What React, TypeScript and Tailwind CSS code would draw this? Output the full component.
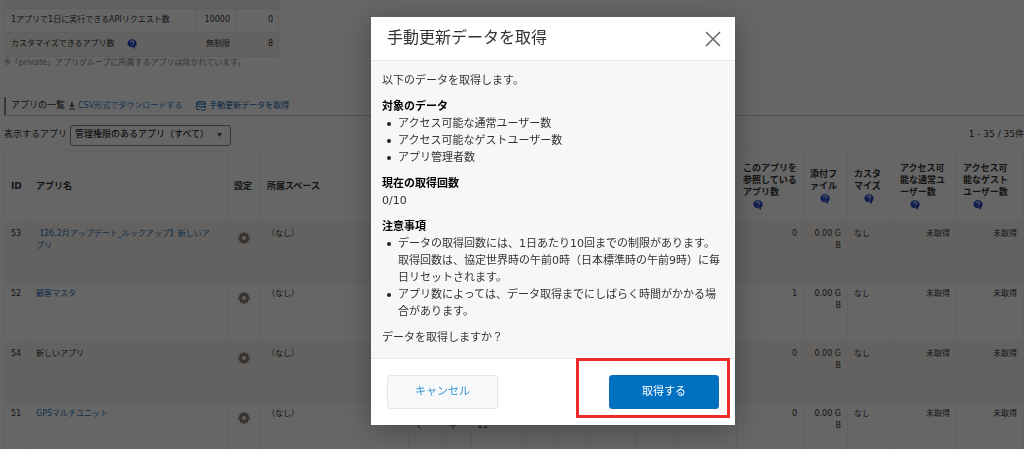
import { useState } from "react";
import type { ReactNode } from "react";

type AppRow = {
  id: number;
  name: string;
  linked: boolean;
  references: number;
  scope?: string;
  status?: string;
  updated?: string;
};

const apps: AppRow[] = [
  { id: 53, name: "【26.2月アップデート_ルックアップ】新しいアプリ", linked: true, references: 0 },
  { id: 52, name: "顧客マスタ", linked: true, references: 1 },
  { id: 54, name: "新しいアプリ", linked: false, references: 0 },
  {
    id: 51,
    name: "GPSマルチユニット",
    linked: true,
    references: 0,
    scope: "て",
    status: "中",
    updated: "21",
  },
];

const notes = [
  "データの取得回数には、1日あたり10回までの制限があります。取得回数は、協定世界時の午前0時（日本標準時の午前9時）に毎日リセットされます。",
  "アプリ数によっては、データ取得までにしばらく時間がかかる場合があります。",
];

const targets = [
  "アクセス可能な通常ユーザー数",
  "アクセス可能なゲストユーザー数",
  "アプリ管理者数",
];

const HelpIcon = () => (
  <svg viewBox="0 0 20 20" className="inline-block size-[10px] shrink-0" aria-hidden="true">
    <path
      d="M10 0.5C4.5 0.5 0.8 4 0.8 8.6s3.7 8 8.7 8.1c1 0 2-.1 2.9-.4.7 1.5 2 2.7 4.2 3.2-.8-1.3-.9-2.8-.6-4.3 2.1-1.5 3.3-3.8 3.3-6.6C19.3 4 15.5.5 10 .5z"
      fill="#2447c8"
    />
    <path
      d="M6.8 6.8C6.9 4.8 8.2 3.7 10.2 3.7s3.4 1.1 3.4 2.8c0 2.300-3.100 2.200-3.100 4.200M10.500 12.300v2.200"
      fill="none"
      stroke="#d5dcf5"
      strokeWidth="2.2"
    />
  </svg>
);

const GearIcon = () => (
  <svg viewBox="0 0 24 24" className="size-3" aria-hidden="true">
    <g fill="#8a817c">
      <rect x="9" y="0.5" width="6" height="23" rx="1" />
      <rect x="9" y="0.5" width="6" height="23" rx="1" transform="rotate(45 12 12)" />
      <rect x="9" y="0.5" width="6" height="23" rx="1" transform="rotate(90 12 12)" />
      <rect x="9" y="0.5" width="6" height="23" rx="1" transform="rotate(135 12 12)" />
      <circle cx="12" cy="12" r="9" />
    </g>
    <circle cx="12" cy="12" r="4" fill="#f4f4f0" />
  </svg>
);

const DownloadIcon = () => (
  <svg viewBox="0 0 12 16" className="h-2 w-[6px]" fill="#444" aria-hidden="true">
    <path d="M4.500 0h3v6h3.500l-5 5.500L1 6h3.500zM0 13h12v2H0z" />
  </svg>
);

const DataIcon = () => (
  <svg viewBox="0 0 20 20" className="size-[10px]" fill="none" stroke="#0b5fae" strokeWidth="2" aria-hidden="true">
    <path d="M7 17H3.500A2 2 0 0 1 1.500 15V3.500a2 2 0 0 1 2-2h13a2 2 0 0 1 2 2V8M1.500 6h17M5 10.500h4" />
    <path d="M9.500 14.500c0-2.500 2-4 4.500-4 1.800 0 3.200.8 4 2M18.500 9.500v3.200h-3.200M18.500 15.500c0 2-2 3.500-4.500 3.500-1.800 0-3.200-.8-4-2" />
  </svg>
);

const HeadCell = ({ children, help }: { children?: ReactNode; help?: boolean }) => (
  <th className="border border-[#f2f2f2] pr-1 pl-[6px] text-left align-middle text-[9px] leading-3 font-bold text-[#333]">
    {children}
    {help && (
      <div className="pl-[10px]">
        <HelpIcon />
      </div>
    )}
  </th>
);

const Cell = ({ children, right }: { children?: ReactNode; right?: boolean }) => (
  <td
    className={
      right
        ? "border border-[#f2f2f2] pt-[5px] pr-[6px] pl-2 text-right align-top break-all"
        : "border border-[#f2f2f2] pt-[5px] pr-1 pl-[6px] text-left align-top break-all"
    }
  >
    {children}
  </td>
);

const UsageTable = () => (
  <table className="w-[275px] table-fixed border-collapse text-[8px] text-[#333]">
    <colgroup>
      <col />
      <col className="w-10" />
      <col className="w-[43px]" />
    </colgroup>
    <tbody>
      <tr className="h-2 bg-[#f7f6f1]">
        <td className="border border-t-0 border-[#ecece8]" />
        <td className="border border-t-0 border-[#ecece8]" />
        <td className="border border-t-0 border-[#ecece8]" />
      </tr>
      <tr className="h-6">
        <td className="border border-[#ecece8] pl-[6px]">1アプリで1日に実行できるAPIリクエスト数</td>
        <td className="border border-[#ecece8] pr-[5px] text-right">10000</td>
        <td className="border border-[#ecece8] pr-[5px] text-right">0</td>
      </tr>
      <tr className="h-6 bg-[#f7f6f1]">
        <td className="border border-[#ecece8] pl-[6px]">
          <div className="flex items-center gap-3">
            カスタマイズできるアプリ数
            <HelpIcon />
          </div>
        </td>
        <td className="border border-[#ecece8] pr-[5px] text-right">無制限</td>
        <td className="border border-[#ecece8] pr-[5px] text-right">8</td>
      </tr>
    </tbody>
  </table>
);

const AppTable = () => (
  <table className="w-full table-fixed border-collapse text-[8px] leading-3 text-[#333]">
    <colgroup>
      <col className="w-[25px]" />
      <col className="w-[198px]" />
      <col className="w-[33px]" />
      <col />
      <col className="w-[34px]" />
      <col className="w-[29px]" />
      <col className="w-[54px]" />
      <col className="w-[29px]" />
      <col className="w-8" />
      <col className="w-[50px]" />
      <col className="w-[41px]" />
      <col className="w-[59px]" />
      <col className="w-[67px]" />
      <col className="w-11" />
      <col className="w-[46px]" />
      <col className="w-[63px]" />
      <col className="w-[67px]" />
    </colgroup>
    <thead>
      <tr className="h-[72px]">
        <HeadCell>ID</HeadCell>
        <HeadCell>アプリ名</HeadCell>
        <HeadCell>設定</HeadCell>
        <HeadCell>所属スペース</HeadCell>
        <HeadCell />
        <HeadCell />
        <HeadCell />
        <HeadCell />
        <HeadCell />
        <HeadCell />
        <HeadCell />
        <HeadCell />
        <HeadCell help>このアプリを参照しているアプリ数</HeadCell>
        <HeadCell help>
          添付フ
          <br />
          ァイル
        </HeadCell>
        <HeadCell help>カスタマイズ</HeadCell>
        <HeadCell help>
          アクセス可
          <br />
          能な通常ユ
          <br />
          ーザー数
        </HeadCell>
        <HeadCell help>
          アクセス可
          <br />
          能なゲスト
          <br />
          ユーザー数
        </HeadCell>
      </tr>
    </thead>
    <tbody>
      {apps.map((app) => (
        <tr key={app.id} className="h-[60px] odd:bg-[#f7f6f1]">
          <Cell>{app.id}</Cell>
          <Cell>
            {app.linked ? (
              <a href="#" className="block pr-2 text-[#2a75bb]">
                {app.name}
              </a>
            ) : (
              app.name
            )}
          </Cell>
          <Cell>
            <button type="button" aria-label="設定" className="ml-1 pt-1">
              <GearIcon />
            </button>
          </Cell>
          <Cell>（なし）</Cell>
          <Cell>
            <div className="pt-3">{app.scope}</div>
          </Cell>
          <Cell>
            <div className="pt-3">{app.status}</div>
          </Cell>
          <Cell>
            <div className="pt-3">{app.updated}</div>
          </Cell>
          <Cell />
          <Cell />
          <Cell />
          <Cell />
          <Cell />
          <Cell right>{app.references}</Cell>
          <Cell right>0.00 GB</Cell>
          <Cell>なし</Cell>
          <Cell right>未取得</Cell>
          <Cell right>未取得</Cell>
        </tr>
      ))}
    </tbody>
  </table>
);

const BulletList = ({ items }: { items: string[] }) => (
  <ul>
    {items.map((item) => (
      <li key={item} className="flex gap-[7px] pl-[5px]">
        <span className="mt-[7px] size-1 shrink-0 rounded-full bg-[#222]" />
        <span>{item}</span>
      </li>
    ))}
  </ul>
);

const UpdateDialog = ({ onClose }: { onClose: () => void }) => (
  <div className="fixed inset-0 flex items-start justify-center overflow-hidden bg-black/60 pt-[17px] pl-[82px]">
    <div
      role="dialog"
      aria-labelledby="dialog-title"
      className="w-[364px] bg-white text-[11px] text-[#333] shadow-[0_5px_30px_rgba(0,0,0,0.3)]"
    >
      <div className="flex h-11 items-center justify-between border-b border-[#e8e8e8] pr-[14px] pl-4">
        <h2 id="dialog-title" className="pb-[2px] text-[16px] leading-5">
          手動更新データを取得
        </h2>
        <button type="button" aria-label="閉じる" onClick={onClose}>
          <svg viewBox="0 0 16 16" className="size-4" stroke="#666" strokeWidth="1.5" aria-hidden="true">
            <path d="M1 1l14 14M15 1L1 15" />
          </svg>
        </button>
      </div>
      <div className="flex flex-col gap-[9px] border-b border-[#e8e8e8] bg-[#f7f7f7] px-[11px] pt-[11px] pb-3 leading-[17px]">
        <p>以下のデータを取得します。</p>
        <div>
          <h3 className="font-bold text-black">対象のデータ</h3>
          <BulletList items={targets} />
        </div>
        <div>
          <h3 className="font-bold text-black">現在の取得回数</h3>
          <p>0/10</p>
        </div>
        <div>
          <h3 className="font-bold text-black">注意事項</h3>
          <BulletList items={notes} />
        </div>
        <p>データを取得しますか？</p>
      </div>
      <div className="flex items-center justify-between p-4">
        <button
          type="button"
          onClick={onClose}
          className="h-[34px] w-[111px] rounded-[3px] border border-[#e3e5e6] bg-[#f7f8f9] text-[#3498db]"
        >
          キャンセル
        </button>
        <div className="relative">
          <button type="button" className="block h-[34px] w-[110px] rounded-[3px] border border-[#0a6cb8] bg-[#0070c0] text-white">
            取得する
          </button>
          <div className="pointer-events-none absolute -top-[17px] -right-[11px] h-[60px] w-[154px] border-3 border-[#ec2c2c]" />
        </div>
      </div>
    </div>
  </div>
);

const App = () => {
  const [open, setOpen] = useState(true);

  return (
    <div className="h-screen overflow-hidden bg-white font-['DejaVu_Sans','Noto_Sans_CJK_JP',sans-serif]" lang="ja">
      <main className="pl-1">
        <UsageTable />
        <p className="text-[8px] leading-3 text-[#888]">
          ※「private」アプリグループに所属するアプリは除かれています。
        </p>
        <div className="mt-7 flex h-[19px] items-start border-b border-[#ccc]">
          <div className="flex h-[18px] items-center border-l-2 border-[#888] pl-[5px]">
            <h2 className="text-[9px] text-[#333]">アプリの一覧</h2>
            <a href="#" className="ml-1 flex items-center gap-[3px] text-[8px] text-[#3181c6]">
              <DownloadIcon />
              CSV形式でダウンロードする
            </a>
            <button
              type="button"
              onClick={() => setOpen(true)}
              className="ml-[14px] flex items-center gap-[3px] text-[8px] text-[#0b5fae]"
            >
              <DataIcon />
              手動更新データを取得
            </button>
          </div>
        </div>
        <div className="flex items-center justify-between pt-[9px] pb-1 text-[9px] text-[#333]">
          <div className="flex items-center gap-[3px]">
            <label htmlFor="app-filter">表示するアプリ</label>
            <div className="relative">
              <select
                id="app-filter"
                className="block h-[21px] w-[161px] appearance-none rounded-[3px] border border-[#888] bg-white pl-1 text-[9px] text-black"
              >
                <option>管理権限のあるアプリ（すべて）</option>
              </select>
              <svg viewBox="0 0 5 4" className="pointer-events-none absolute top-2 right-[9px] h-1 w-[5px]" fill="#555">
                <path d="M0 0h5L2.500 4z" />
              </svg>
            </div>
          </div>
          <span>1 - 35 / 35件</span>
        </div>
        <AppTable />
      </main>
      {open && <UpdateDialog onClose={() => setOpen(false)} />}
    </div>
  );
};

export default App;
